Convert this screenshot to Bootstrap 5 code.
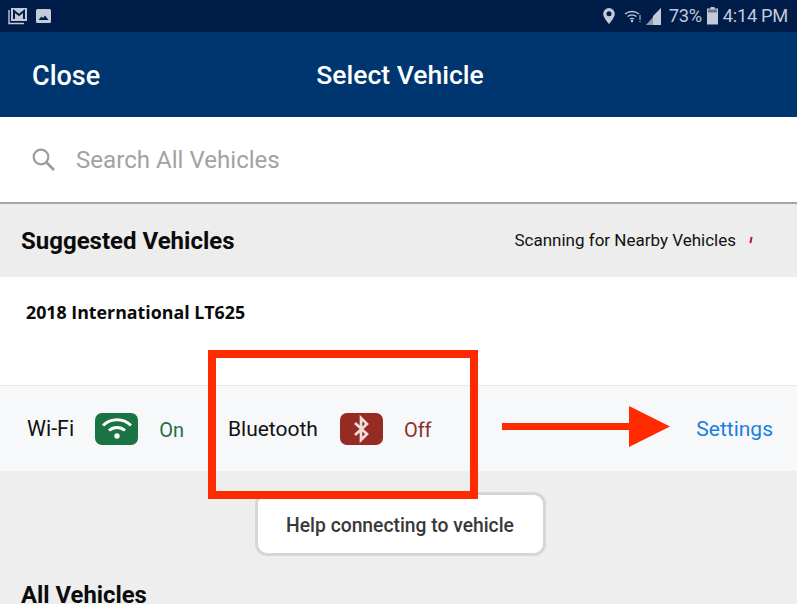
<!DOCTYPE html>
<html lang="en">
<head>
  <meta charset="UTF-8" />
  <meta name="viewport" content="width=device-width, initial-scale=1.0" />
  <title>Select Vehicle</title>
  <link href="https://cdn.jsdelivr.net/npm/bootstrap@5.3.3/dist/css/bootstrap.min.css" rel="stylesheet" />
  <style>
    html, body { height: 100%; overflow: hidden; }
    body { font-family: Roboto, "Liberation Sans", sans-serif; background: #eeeeee; color: #111; position: relative; }
    .app-shell { height: 604px; overflow: hidden; }
    .app-shell > * { flex: none; }
    .status-strip { height: 32px; background: #001c49; color: #c3cad8; padding: 0 9px 0 8px; font-size: 18.300px; }
    .status-text { line-height: 32px; letter-spacing: -.3px; }
    .top-bar { height: 85px; background: #00366f; color: #fff; padding: 0 32px; position: relative; }
    .top-close { font-size: 27px; font-weight: 500; margin-top: 4px; }
    .top-title { font-size: 26.500px; font-weight: 500; position: absolute; left: 3px; right: 0; text-align: center; pointer-events: none; }
    .search-row { height: 87px; background: #fff; padding: 0 31px; border-bottom: 2px solid #a5a5a5; gap: 20px; }
    .search-hint { font-size: 24.100px; color: #a2a2a2; margin-top: 2px; }
    .suggest-row { height: 73px; background: #ededed; padding: 0 21px; }
    .suggest-title { font-size: 24px; font-weight: 700; color: #0b0b0b; }
    .scan-text { font-size: 17px; color: #111; }
    .scan-tick { width: 2px; height: 6px; background: #d0102a; transform: rotate(12deg); margin: 0 24px 2px 14px; }
    .vehicle-row { height: 108px; background: #fff; padding: 22px 26px 0; }
    .vehicle-name { font-family: "Open Sans", sans-serif; font-size: 17.800px; font-weight: 700; color: #0a0a0a; }
    .radio-row { height: 86px; background: #f7f8fa; border-top: 1px solid #e8e8e8; padding: 0 24px 0 27px; font-size: 21px; }
    .radio-row > span:not(.radio-icon), .settings-link { margin-top: 2px; }
    .radio-icon { width: 43px; height: 32px; border-radius: 7px; margin: 0 21px; }
    .icon-on { background: #1a7342; }
    .icon-off { background: #952b22; }
    .wifi-label { font-size: 21.400px; }
    .on-text { color: #1f7044; font-size: 20px; }
    .off-text { color: #8b3228; font-size: 20px; }
    .bt-label { margin-left: 44px; margin-right: 1px; }
    .settings-link { color: #1a7fe0; text-decoration: none; }
    .help-wrap { padding: 21px 0 0 3px; }
    .help-btn { width: 291px; height: 64px; background: #fff; border: 3px solid #d6d6d6; border-radius: 12px; font-size: 19.300px; font-weight: 500; color: #38383c; padding-top: 6px; }
    .all-title { font-size: 23.800px; font-weight: 700; color: #0b0b0b; margin: 25px 0 0 21px; line-height: 29px; }
    .mark-box { position: absolute; left: 208px; top: 350px; width: 270px; height: 149px; border: 8px solid #ff2a00; }
    .mark-arrow { position: absolute; left: 502px; top: 406px; }
    .gap-pin { margin-right: 8px; }
    .gap-wifi { margin-right: 4px; }
    .gap-signal { margin-right: 7px; }
    .gap-batt { margin: 0 5px; }
  </style>
</head>

<body>
  <div class="app-shell d-flex flex-column">

    <div class="status-strip d-flex align-items-center justify-content-between">
      <div class="d-flex align-items-center gap-2">
        <svg width="20" height="18" viewBox="0 0 20 18">
          <path d="M1 3v13.500h15" fill="none" stroke="#c3cad8" stroke-width="1.400"/>
          <rect x="3" y="1" width="16" height="13" fill="#c3cad8"/>
          <path d="M6 12V4l5 4 5-4v8" fill="none" stroke="#001c49" stroke-width="2"/>
        </svg>
        <svg width="15" height="15" viewBox="0 0 15 15">
          <rect width="15" height="14" rx="1.500" fill="#c3cad8"/>
          <path d="M2.500 11l3-3.500 1.500 1.500 2-2.500 3.500 4.500z" fill="#001c49"/>
        </svg>
      </div>
      <div class="d-flex align-items-center">
        <svg width="14" height="18" viewBox="0 0 14 18" class="gap-pin">
          <path fill-rule="evenodd" d="M7 1a5.800 5.800 0 0 0-5.800 5.800C1.200 11 7 17 7 17s5.800-6 5.800-10.200A5.800 5.800 0 0 0 7 1zm0 3.300a2.500 2.500 0 1 1 0 5 2.500 2.500 0 0 1 0-5z" fill="#c3cad8"/>
        </svg>
        <svg width="17" height="14" viewBox="0 0 17 14" class="gap-wifi">
          <g fill="none" stroke="#c3cad8" stroke-width="1.300">
            <path d="M1 5a11 11 0 0 1 14 0"/>
            <path d="M3.500 7.500a7.500 7.500 0 0 1 9 0"/>
            <path d="M6 10a3.500 3.500 0 0 1 4 0"/>
          </g>
          <circle cx="8" cy="12" r="1.200" fill="#c3cad8"/>
          <path d="M16 6v5M16 12v1" stroke="#c3cad8"/>
        </svg>
        <svg width="17" height="19" viewBox="0 0 17 19" class="gap-signal">
          <path d="M16 1v17H1z" fill="#8f99ae"/>
          <path d="M16 1v17H8V9z" fill="#c3cad8"/>
        </svg>
        <span class="status-text">73%</span>
        <svg width="11" height="18" viewBox="0 0 11 18" class="gap-batt">
          <rect x="3.500" width="4" height="2" fill="#c3cad8"/>
          <rect y="1.500" width="11" height="16" fill="#c3cad8"/>
          <rect x="1" y="2.500" width="9" height="3" fill="#68748e"/>
        </svg>
        <span class="status-text">4:14 PM</span>
      </div>
    </div>

    <div class="top-bar d-flex align-items-center">
      <span class="top-close">Close</span>
      <span class="top-title">Select Vehicle</span>
    </div>

    <div class="search-row d-flex align-items-center">
      <svg width="25" height="25" viewBox="0 0 25 25">
        <circle cx="10" cy="10" r="7.300" fill="none" stroke="#9b9b9b" stroke-width="2.200"/>
        <path d="M15.500 15.500l7.500 7.500" stroke="#9b9b9b" stroke-width="2.600"/>
      </svg>
      <span class="search-hint">Search All Vehicles</span>
    </div>

    <div class="suggest-row d-flex align-items-center justify-content-between">
      <span class="suggest-title">Suggested Vehicles</span>
      <div class="d-flex align-items-center">
        <span class="scan-text">Scanning for Nearby Vehicles</span>
        <span class="scan-tick"></span>
      </div>
    </div>

    <div class="vehicle-row">
      <div class="vehicle-name">2018 International LT625</div>
    </div>

    <div class="radio-row d-flex align-items-center">
      <span class="wifi-label">Wi-Fi</span>
      <span class="radio-icon icon-on d-flex align-items-center justify-content-center">
        <svg width="32" height="25" viewBox="0 0 32 25">
          <g fill="none" stroke="#fff" stroke-width="3">
            <path d="M2 9.500a20 20 0 0 1 28 0"/>
            <path d="M8 14.500a12 12 0 0 1 16 0"/>
          </g>
          <circle cx="16" cy="20" r="2.700" fill="#fff"/>
        </svg>
      </span>
      <span class="on-text">On</span>
      <span class="bt-label">Bluetooth</span>
      <span class="radio-icon icon-off d-flex align-items-center justify-content-center">
        <svg width="18" height="28" viewBox="0 0 18 28">
          <path d="M3 8l12 11-6 6V3l6 6L3 20" fill="none" stroke="#f1dcd9" stroke-width="2.700"/>
        </svg>
      </span>
      <span class="off-text">Off</span>
      <a class="settings-link ms-auto" href="#">Settings</a>
    </div>

    <div class="help-wrap d-flex justify-content-center">
      <button class="help-btn" type="button">Help connecting to vehicle</button>
    </div>

    <div class="all-title">All Vehicles</div>
  </div>

  <div class="mark-box"></div>
  <svg class="mark-arrow" width="170" height="42" viewBox="0 0 170 42">
    <path d="M0 17h127V0l41 20.500-41 20.500V24H0z" fill="#ff2a00"/>
  </svg>
</body>

</html>
